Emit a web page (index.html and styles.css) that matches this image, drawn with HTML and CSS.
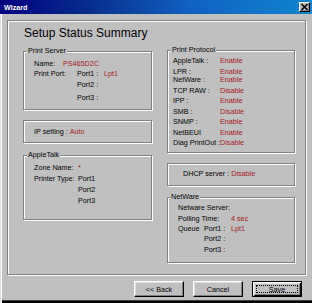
FILE: index.html
```html
<!DOCTYPE html>
<html lang="en">
<head>
  <meta charset="UTF-8" />
  <title>Wizard</title>
  <link rel="stylesheet" href="styles.css">
</head>
<body>
  <div class="window">
    <div class="titlebar">
      <span class="title">Wizard</span>
      <span class="close">
        <svg width="9" height="8" viewBox="0 0 9 8"><path d="M1.5 1l6 6M7.5 1l-6 6" stroke="#000" stroke-width="1.6" fill="none"/></svg>
      </span>
    </div>

    <div class="panel">
      <h1 class="heading">Setup Status Summary</h1>

      <div class="columns">
        <div class="col col-left">
          <div class="group group-server">
            <div class="group-title">Print Server</div>
            <div class="rows rows-server">
              <div class="row"><span class="key w29">Name:</span><span class="val">PS465D2C</span></div>
              <div class="row"><span class="key w43">Print Port:</span><span class="key w27">Port1 :</span><span class="val">Lpt1</span></div>
              <div class="row indent43">Port2 :</div>
              <div class="row indent43">Port3 :</div>
            </div>
          </div>

          <div class="group group-ip">
            <div class="row">IP setting : <span class="val">Auto</span></div>
          </div>

          <div class="group group-apple">
            <div class="group-title">AppleTalk</div>
            <div class="rows rows-apple">
              <div class="row"><span class="key w44">Zone Name:</span><span class="val">*</span></div>
              <div class="row"><span class="key w44">Printer Type:</span>Port1</div>
              <div class="row indent44">Port2</div>
              <div class="row indent44">Port3</div>
            </div>
          </div>
        </div>

        <div class="col col-right">
          <div class="group group-protocol">
            <div class="group-title">Print Protocol</div>
            <div class="rows rows-protocol">
              <div class="row"><span class="key w47">AppleTalk :</span><span class="val">Enable</span></div>
              <div class="row"><span class="key w47">LPR :</span><span class="val">Enable</span></div>
              <div class="row"><span class="key w47">NetWare :</span><span class="val">Enable</span></div>
              <div class="row"><span class="key w47">TCP RAW :</span><span class="val">Disable</span></div>
              <div class="row"><span class="key w47">IPP :</span><span class="val">Enable</span></div>
              <div class="row"><span class="key w47">SMB :</span><span class="val">Disable</span></div>
              <div class="row"><span class="key w47">SNMP :</span><span class="val">Enable</span></div>
              <div class="row"><span class="key w47">NetBEUI</span><span class="val">Enable</span></div>
              <div class="row"><span class="key w47">Diag PrintOut :</span><span class="val">Disable</span></div>
            </div>
          </div>

          <div class="group group-dhcp">
            <div class="row">DHCP server : <span class="val">Disable</span></div>
          </div>

          <div class="group group-netware">
            <div class="group-title">NetWare</div>
            <div class="rows rows-netware">
              <div class="row">Netware Server:</div>
              <div class="row"><span class="key w53">Polling Time:</span><span class="val">4 sec</span></div>
              <div class="row"><span class="key w26">Queue</span><span class="key w27">Port1 :</span><span class="val">Lpt1</span></div>
              <div class="row indent26">Port2 :</div>
              <div class="row indent26">Port3 :</div>
            </div>
          </div>
        </div>
      </div>
    </div>

    <div class="buttons">
      <button class="btn">&lt;&lt; Back</button>
      <button class="btn">Cancel</button>
      <button class="btn btn-default"><span class="focus">Save</span></button>
    </div>
  </div>
</body>
</html>
```

FILE: styles.css
```css
* {
  box-sizing: border-box;
}

body {
  margin: 0;
  font-family: "Liberation Sans", Arial, sans-serif;
  font-size: 7.2px;
  color: #000;
  background: #c0c0c0;
}

.window {
  width: 312px;
  height: 303px;
  background: #c0c0c0;
  box-shadow: inset 1px 0 #dfdfdf, inset 2px 0 #fff, inset 0 -2px #000, inset 0 -3px #404040;
  overflow: hidden;
}

/* title bar */
.titlebar {
  height: 14px;
  display: flex;
  align-items: center;
  justify-content: space-between;
  padding: 0 2px 0 4px;
  background: linear-gradient(90deg, #000080 0%, #08308f 30%, #1060c0 60%, #1084d0 100%);
}

.title {
  color: #fff;
  font-weight: bold;
  font-size: 7.2px;
}

.close {
  width: 11px;
  height: 10px;
  display: flex;
  align-items: center;
  justify-content: center;
  background: #c0c0c0;
  border: 1px solid;
  border-color: #fff #000 #000 #fff;
  box-shadow: inset -1px -1px #808080;
}

/* main etched panel */
.panel {
  width: 299px;
  margin: 6px 0 0 7px;
  padding: 0 0 11px 15px;
  border: 1px solid #808080;
  box-shadow: inset 1px 1px #fff, 1px 1px #fff;
}

.heading {
  margin: 5px 0 0 1px;
  font-size: 12px;
  font-weight: normal;
  line-height: 14px;
}

.columns {
  display: grid;
  grid-template-columns: 129px 128px;
  column-gap: 15px;
  align-items: start;
  margin-top: 10px;
}

.col-left {
  margin-top: 1px;
}

/* group boxes */
.group {
  border: 1px solid #808080;
  box-shadow: inset 1px 1px #fff, 1px 1px #fff;
  padding-left: 10px;
}

.group-title {
  width: max-content;
  background: #c0c0c0;
  padding: 0 1px;
  margin: -6px 0 0 -7px;
  line-height: 10px;
}

.rows {
  display: grid;
}

.row {
  display: flex;
  line-height: 10px;
  white-space: pre;
}

.key {
  flex: none;
}

.val {
  color: #a8161c;
}

.w26 { width: 26px; }
.w27 { width: 27px; }
.w29 { width: 29px; }
.w43 { width: 43px; }
.w44 { width: 44px; }
.w47 { width: 47px; }
.w53 { width: 53px; }

.indent26 { padding-left: 26px; }
.indent43 { padding-left: 43px; }
.indent44 { padding-left: 44px; }

.group-server {
  padding-bottom: 6px;
}

.rows-server {
  margin-top: 3px;
  grid-template-rows: 10px 11px 13px 10px;
}

.group-ip {
  margin-top: 10px;
  padding-top: 6px;
  padding-bottom: 5px;
}

.group-apple {
  margin-top: 12px;
  padding-bottom: 13px;
}

.rows-apple {
  margin-top: 3px;
  grid-template-rows: 11px 11px 11px 10px;
}

.group-protocol {
  padding-left: 5px;
  padding-bottom: 4px;
}

.group-protocol .group-title {
  margin-left: -2px;
}

.rows-protocol {
  margin-top: 1px;
  grid-template-rows: 11px 8px 11px 10px 11px 10px 11px 10px 10px;
}

.group-dhcp {
  margin-top: 10px;
  padding: 5px 0 6px 15px;
}

.group-netware {
  margin-top: 11px;
  padding-bottom: 7px;
}

.group-netware .group-title {
  margin-left: -8px;
}

.rows-netware {
  margin-top: 1px;
  grid-template-rows: 11px 10px 10px 11px 10px;
}

/* buttons */
.buttons {
  display: flex;
  justify-content: flex-end;
  gap: 9px;
  margin-top: 6px;
  padding-right: 10px;
}

.btn {
  width: 50px;
  height: 16px;
  padding: 0;
  font: inherit;
  color: #000;
  background: #c0c0c0;
  border: 1px solid;
  border-color: #fff #000 #000 #fff;
  box-shadow: inset -1px -1px #808080, inset 1px 1px #dfdfdf;
}

.btn-default {
  border-color: #000;
  box-shadow: inset 1px 1px #fff, inset -1px -1px #000, inset 2px 2px #dfdfdf, inset -2px -2px #808080;
  padding: 3px;
}

.focus {
  display: block;
  height: 100%;
  line-height: 8px;
  border: 1px dotted #000;
}
```
